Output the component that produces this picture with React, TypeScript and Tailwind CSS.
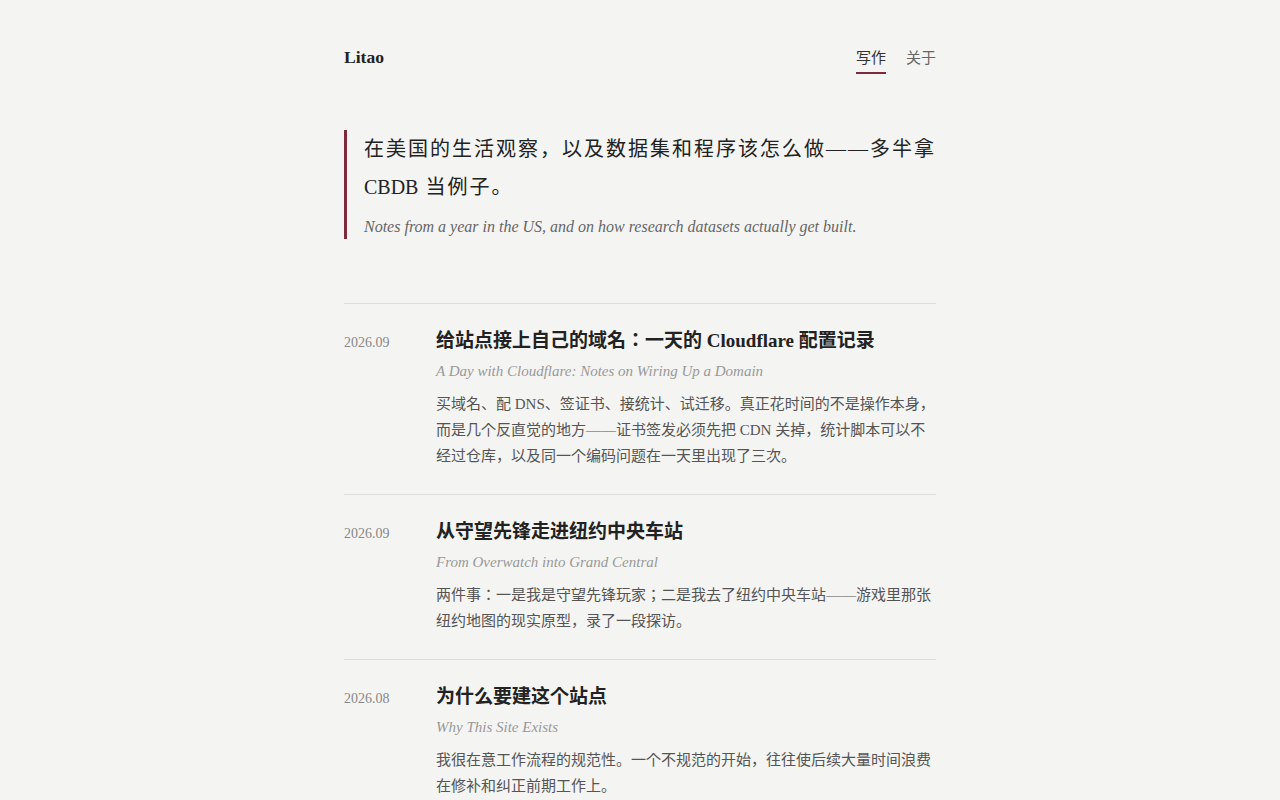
import React from "react";

const posts = [
  {
    date: "2026.09",
    title: "给站点接上自己的域名：一天的 Cloudflare 配置记录",
    en: "A Day with Cloudflare: Notes on Wiring Up a Domain",
    summary:
      "买域名、配 DNS、签证书、接统计、试迁移。真正花时间的不是操作本身，而是几个反直觉的地方——证书签发必须先把 CDN 关掉，统计脚本可以不经过仓库，以及同一个编码问题在一天里出现了三次。",
  },
  {
    date: "2026.09",
    title: "从守望先锋走进纽约中央车站",
    en: "From Overwatch into Grand Central",
    summary:
      "两件事：一是我是守望先锋玩家；二是我去了纽约中央车站——游戏里那张纽约地图的现实原型，录了一段探访。",
  },
  {
    date: "2026.08",
    title: "为什么要建这个站点",
    en: "Why This Site Exists",
    summary:
      "我很在意工作流程的规范性。一个不规范的开始，往往使后续大量时间浪费在修补和纠正前期工作上。",
  },
];

export default function App() {
  return (
    <div className="min-h-screen bg-[#f4f4f2] font-['Liberation_Serif','Noto_Sans_CJK_KR',serif] text-[#222]">
      <div className="mx-auto w-[592px] pt-[46px] pb-10">
        <header className="flex items-start justify-between">
          <div className="text-[17.6px] font-bold leading-[22px] text-[#222]">Litao</div>
          <nav className="flex gap-5 pt-[1px] text-[15px] leading-[22px]">
            <a className="border-b-2 border-[#7d2a3c] pb-[3px] text-[#333]">写作</a>
            <a className="pb-[3px] text-[#666]">关于</a>
          </nav>
        </header>

        <blockquote className="mt-[56px] border-l-[3px] border-[#7d2a3c] pl-[17px]">
          <p className="mr-[-6px] text-[20px] leading-[38px] tracking-[2px] text-[#222]">
            在美国的生活观察，以及数据集和程序该怎么做——多半拿 <span className="tracking-normal">CBDB</span> 当例子。
          </p>
          <p className="mt-[9px] text-[16px] italic leading-[24px] text-[#666]">
            Notes from a year in the US, and on how research datasets actually get built.
          </p>
        </blockquote>

        <div className="mt-[64px]">
          {posts.map((p, i) => (
            <article
              key={i}
              className="flex items-start border-t border-[#dddddb] pt-[23px] pb-[25px]"
            >
              <div className="mt-[2px] w-[92px] shrink-0 text-[14px] leading-[28px] text-[#888]">{p.date}</div>
              <div className="min-w-0 flex-1">
                <h2 className="text-[19px] font-bold leading-[28px] text-[#222]">{p.title}</h2>
                <p className="mt-[5px] text-[15px] italic leading-[22px] text-[#999]">{p.en}</p>
                <p className="mt-[9px] text-[15px] leading-[26px] text-[#555]">{p.summary}</p>
              </div>
            </article>
          ))}
        </div>
      </div>
    </div>
  );
}
